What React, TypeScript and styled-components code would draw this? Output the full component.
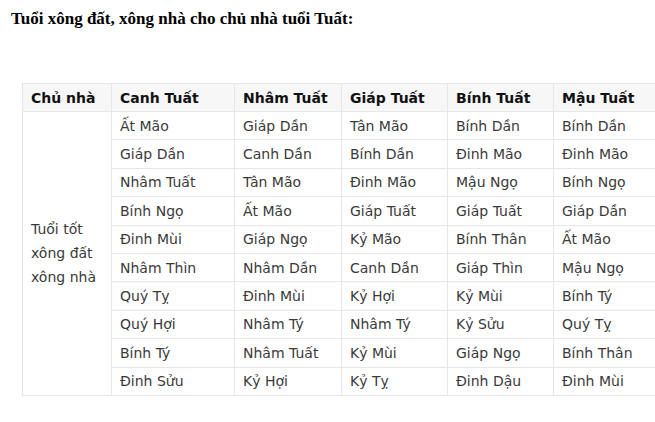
import React from "react";
import styled, { createGlobalStyle } from "styled-components";

const Global = createGlobalStyle`
  html, body { margin: 0; padding: 0; background: #fff; overflow: hidden; }
`;

const Page = styled.div`
  padding: 8px 0 0 11px;
  width: 655px;
  height: 422px;
  box-sizing: border-box;
  overflow: hidden;
`;

const Title = styled.h1`
  margin: 0;
  font-family: "Liberation Serif", "Times New Roman", serif;
  font-weight: bold;
  font-size: 17px;
  line-height: 22px;
  color: #000;
`;

const Table = styled.table`
  margin: 53px 0 0 11px;
  border-collapse: collapse;
  table-layout: fixed;
  width: 640px;
  font-family: "DejaVu Sans", Verdana, sans-serif;
  font-size: 14px;
  color: #3a3a3a;
`;

const Th = styled.th`
  background: #f7f7f7;
  border: 1px solid #e6e6e6;
  text-align: left;
  font-weight: bold;
  color: #111;
  height: 27px;
  padding: 0 8px;
  white-space: nowrap;
  overflow: hidden;
`;

const Td = styled.td`
  border: 1px solid #e6e6e6;
  height: 27.4px;
  padding: 0 8px;
  white-space: nowrap;
  vertical-align: middle;
  overflow: hidden;
`;

const LabelCell = styled(Td)`
  white-space: normal;
  line-height: 24px;
`;

const headers = ["Chủ nhà", "Canh Tuất", "Nhâm Tuất", "Giáp Tuất", "Bính Tuất", "Mậu Tuất"];
const widths = [89, 123, 107, 106, 106, 109];

const rows: string[][] = [
  ["Ất Mão", "Giáp Dần", "Tân Mão", "Bính Dần", "Bính Dần"],
  ["Giáp Dần", "Canh Dần", "Bính Dần", "Đinh Mão", "Đinh Mão"],
  ["Nhâm Tuất", "Tân Mão", "Đinh Mão", "Mậu Ngọ", "Bính Ngọ"],
  ["Bính Ngọ", "Ất Mão", "Giáp Tuất", "Giáp Tuất", "Giáp Dần"],
  ["Đinh Mùi", "Giáp Ngọ", "Kỷ Mão", "Bính Thân", "Ất Mão"],
  ["Nhâm Thìn", "Nhâm Dần", "Canh Dần", "Giáp Thìn", "Mậu Ngọ"],
  ["Quý Tỵ", "Đinh Mùi", "Kỷ Hợi", "Kỷ Mùi", "Bính Tý"],
  ["Quý Hợi", "Nhâm Tý", "Nhâm Tý", "Kỷ Sửu", "Quý Tỵ"],
  ["Bính Tý", "Nhâm Tuất", "Kỷ Mùi", "Giáp Ngọ", "Bính Thân"],
  ["Đinh Sửu", "Kỷ Hợi", "Kỷ Tỵ", "Đinh Dậu", "Đinh Mùi"],
];

export default function App() {
  return (
    <>
      <Global />
      <Page>
        <Title>Tuổi xông đất, xông nhà cho chủ nhà tuổi Tuất:</Title>
        <Table>
          <colgroup>
            {widths.map((w, i) => (
              <col key={i} style={{ width: w }} />
            ))}
          </colgroup>
          <thead>
            <tr>
              {headers.map((h) => (
                <Th key={h}>{h}</Th>
              ))}
            </tr>
          </thead>
          <tbody>
            {rows.map((r, i) => (
              <tr key={i}>
                {i === 0 && (
                  <LabelCell rowSpan={rows.length}>
                    Tuổi tốt xông đất xông nhà
                  </LabelCell>
                )}
                {r.map((c, j) => (
                  <Td key={j}>{c}</Td>
                ))}
              </tr>
            ))}
          </tbody>
        </Table>
      </Page>
    </>
  );
}
